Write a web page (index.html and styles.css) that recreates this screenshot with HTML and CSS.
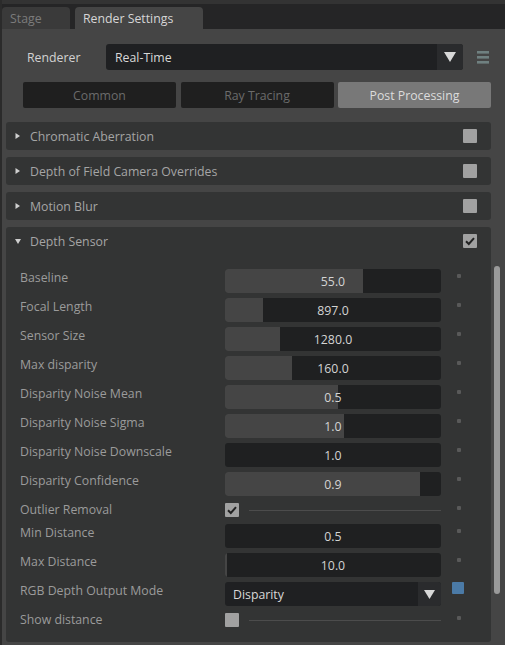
FILE: index.html
```html
<!DOCTYPE html>
<html>
<head>
<meta charset="utf-8">
<link rel="stylesheet" href="styles.css">
</head>
<body>
<div class="window">
  <div class="tabbar">
    <div class="tab tab-stage">Stage</div>
    <div class="tab tab-active">Render Settings</div>
  </div>
  <div class="main">
    <div class="renderer-row">
      <span class="renderer-label">Renderer</span>
      <div class="combo combo-big">
        <span class="combo-text">Real-Time</span>
        <span class="combo-arrow"><svg width="12" height="10" viewBox="0 0 12 10"><polygon points="0,0 12,0 6,10" fill="#d8d8d8"/></svg></span>
      </div>
      <svg class="menu-icon" width="12" height="13" viewBox="0 0 12 13"><rect x="0" y="0" width="12" height="2.6" fill="#6f8080"/><rect x="0" y="5" width="12" height="2.6" fill="#6f8080"/><rect x="0" y="10" width="12" height="2.6" fill="#6f8080"/></svg>
    </div>
    <div class="modes">
      <div class="mode">Common</div>
      <div class="mode">Ray Tracing</div>
      <div class="mode mode-active">Post Processing</div>
    </div>
    <div class="scroll">
      <div class="section">
        <div class="section-head">
          <svg class="tri" width="5" height="6" viewBox="0 0 5 6"><polygon points="0,0 4.5,3 0,6" fill="#cfcfcf"/></svg>
          <span class="section-title">Chromatic Aberration</span>
          <span class="cb"></span>
        </div>
      </div>
      <div class="section">
        <div class="section-head">
          <svg class="tri" width="5" height="6" viewBox="0 0 5 6"><polygon points="0,0 4.5,3 0,6" fill="#cfcfcf"/></svg>
          <span class="section-title">Depth of Field Camera Overrides</span>
          <span class="cb"></span>
        </div>
      </div>
      <div class="section">
        <div class="section-head">
          <svg class="tri" width="5" height="6" viewBox="0 0 5 6"><polygon points="0,0 4.5,3 0,6" fill="#cfcfcf"/></svg>
          <span class="section-title">Motion Blur</span>
          <span class="cb"></span>
        </div>
      </div>
      <div class="section section-open">
        <div class="section-head">
          <svg class="tri" width="6" height="5" viewBox="0 0 6 5"><polygon points="0,0 6,0 3,5" fill="#cfcfcf"/></svg>
          <span class="section-title">Depth Sensor</span>
          <span class="cb cb-checked"><svg width="14" height="14" viewBox="0 0 14 14"><path d="M3 7.2 L5.8 10 L11 4.2" fill="none" stroke="#222" stroke-width="2"/></svg></span>
        </div>
        <div class="props">
          <span class="label">Baseline</span>
          <div class="field"><div class="fill" style="width:138px"></div><span class="val">55.0</span></div>
          <span class="ind"><span class="dot"></span></span>

          <span class="label">Focal Length</span>
          <div class="field"><div class="fill" style="width:38px"></div><span class="val">897.0</span></div>
          <span class="ind"><span class="dot"></span></span>

          <span class="label">Sensor Size</span>
          <div class="field"><div class="fill" style="width:55px"></div><span class="val">1280.0</span></div>
          <span class="ind"><span class="dot"></span></span>

          <span class="label">Max disparity</span>
          <div class="field"><div class="fill" style="width:67px"></div><span class="val">160.0</span></div>
          <span class="ind"><span class="dot"></span></span>

          <span class="label">Disparity Noise Mean</span>
          <div class="field"><div class="fill" style="width:113px"></div><span class="val">0.5</span></div>
          <span class="ind"><span class="dot"></span></span>

          <span class="label">Disparity Noise Sigma</span>
          <div class="field"><div class="fill" style="width:119px"></div><span class="val">1.0</span></div>
          <span class="ind"><span class="dot"></span></span>

          <span class="label">Disparity Noise Downscale</span>
          <div class="field"><div class="fill" style="width:0px"></div><span class="val">1.0</span></div>
          <span class="ind"><span class="dot"></span></span>

          <span class="label">Disparity Confidence</span>
          <div class="field"><div class="fill" style="width:195px"></div><span class="val">0.9</span></div>
          <span class="ind"><span class="dot"></span></span>

          <span class="label label-short">Outlier Removal</span>
          <div class="boolrow"><span class="cb cb-checked"><svg width="14" height="14" viewBox="0 0 14 14"><path d="M3 7.2 L5.8 10 L11 4.2" fill="none" stroke="#222" stroke-width="2"/></svg></span><span class="rule"></span></div>
          <span class="ind ind-short"><span class="dot"></span></span>

          <span class="label">Min Distance</span>
          <div class="field"><div class="fill" style="width:0px"></div><span class="val">0.5</span></div>
          <span class="ind"><span class="dot"></span></span>

          <span class="label">Max Distance</span>
          <div class="field"><div class="fill" style="width:2px"></div><span class="val">10.0</span></div>
          <span class="ind"><span class="dot"></span></span>

          <span class="label">RGB Depth Output Mode</span>
          <div class="combo combo-small">
            <span class="combo-text">Disparity</span>
            <span class="combo-arrow"><svg width="11" height="9" viewBox="0 0 11 9"><polygon points="0,0 11,0 5.5,9" fill="#d8d8d8"/></svg></span>
          </div>
          <span class="ind"><span class="blue"></span></span>

          <span class="label label-short">Show distance</span>
          <div class="boolrow"><span class="cb"></span><span class="rule"></span></div>
          <span class="ind ind-short"><span class="dot"></span></span>
        </div>
      </div>
      <div class="scrollbar"><div class="thumb"></div></div>
    </div>
  </div>
</div>
</body>
</html>
```

FILE: styles.css
```css
html, body {
  margin: 0;
  padding: 0;
  background: #454545;
  overflow: hidden;
}

.window {
  width: 505px;
  height: 645px;
  display: flex;
  flex-direction: column;
  font-family: "Open Sans", "Noto Sans", sans-serif;
  font-size: 12.3px;
  font-weight: 500;
  box-sizing: border-box;
  border-left: 2px solid #2b2b2b;
  background: #454545;
}

.tabbar {
  height: 29px;
  flex: none;
  display: flex;
  align-items: flex-end;
  gap: 5px;
  background: #252526;
  border-top: 4px solid #333333;
  box-sizing: border-box;
}

.tab {
  height: 22px;
  line-height: 21px;
  padding-left: 8px;
  padding-top: 1px;
  box-sizing: border-box;
  border-radius: 4px 4px 0 0;
  white-space: nowrap;
}

.tab-stage {
  width: 68px;
  background: #3a3a3a;
  color: #7c7c7c;
}

.tab-active {
  width: 128px;
  background: #454545;
  color: #d6d6d6;
}

.main {
  flex: 1;
  display: flex;
  flex-direction: column;
}

.renderer-row {
  margin-top: 15px;
  height: 26px;
  display: flex;
  align-items: center;
  padding-left: 25px;
}

.renderer-label {
  width: 79px;
  padding-top: 1px;
  color: #d2d2d2;
}

.combo {
  display: flex;
  align-items: stretch;
  background: #1f2022;
  border-radius: 3px;
  overflow: hidden;
  box-sizing: border-box;
}

.combo-big {
  width: 357px;
  height: 26px;
}

.combo-text {
  flex: 1;
  display: flex;
  align-items: center;
  padding-left: 9px;
  padding-top: 1px;
  color: #d8d8d8;
}

.combo-arrow {
  width: 26px;
  background: #2a2b2d;
  display: flex;
  align-items: center;
  justify-content: center;
}

.menu-icon {
  margin-left: 14px;
}

.modes {
  margin-top: 12px;
  margin-left: 21px;
  width: 468px;
  display: flex;
  gap: 4.5px;
}

.mode {
  flex: 1;
  height: 26px;
  line-height: 27px;
  text-align: center;
  background: #1f1f1f;
  color: #6b6b6b;
  border-radius: 2px;
  overflow: hidden;
}

.mode-active {
  background: #787878;
  color: #dcdcdc;
}

.scroll {
  position: relative;
  margin-top: 14px;
  margin-left: 4px;
  width: 485px;
  display: flex;
  flex-direction: column;
  gap: 7px;
}

.section {
  background: #333434;
  border-radius: 3px;
}

.section-head {
  height: 28px;
  display: flex;
  align-items: center;
  padding-left: 9px;
  padding-right: 14px;
}

.tri {
  flex: none;
  width: 6px;
}

.section-title {
  flex: 1;
  margin-left: 9px;
  padding-top: 1px;
  color: #a5a5a5;
}

.cb {
  width: 14px;
  height: 14px;
  background: #a1a1a1;
  border-radius: 1px;
  flex: none;
  display: block;
}

.cb svg {
  display: block;
}

.section-open {
  padding-bottom: 13px;
}

.props {
  margin-top: 14px;
  padding-left: 14px;
  display: grid;
  grid-template-columns: 205px 216px 36px;
  row-gap: 5px;
}

.label {
  color: #9b9b9b;
  line-height: 16px;
  padding-top: 1px;
  white-space: nowrap;
}

.field {
  position: relative;
  height: 24px;
  background: #1f2021;
  border-radius: 3px;
  overflow: hidden;
}

.fill {
  position: absolute;
  left: 0;
  top: 0;
  bottom: 0;
  background: #454545;
}

.val {
  position: relative;
  display: block;
  text-align: center;
  line-height: 24px;
  padding-top: 1px;
  color: #d4d4d4;
}

.combo-small {
  height: 24px;
}

.combo-small .combo-text {
  padding-left: 8px;
}

.combo-small .combo-arrow {
  width: 23px;
}

.ind {
  display: flex;
  justify-content: center;
  align-items: flex-start;
}

.dot {
  margin-top: 5px;
  width: 4px;
  height: 4px;
  background: #595959;
  border-radius: 1px;
}

.blue {
  width: 12px;
  height: 12px;
  background: #4b7aa6;
  border-radius: 1px;
  margin-left: -3px;
}

.boolrow {
  height: 18px;
  display: flex;
  align-items: flex-start;
}

.boolrow .cb {
  margin-top: 2px;
}

.rule {
  flex: 1;
  margin-left: 10px;
  margin-top: 9px;
  height: 1px;
  background: #4c4c4c;
}

.scrollbar {
  position: absolute;
  left: 488px;
  top: 0;
  width: 6px;
  height: 100%;
}

.thumb {
  position: absolute;
  left: 0;
  top: 144px;
  width: 6px;
  height: 328px;
  background: #9a9a9a;
  border-radius: 3px;
}
```
